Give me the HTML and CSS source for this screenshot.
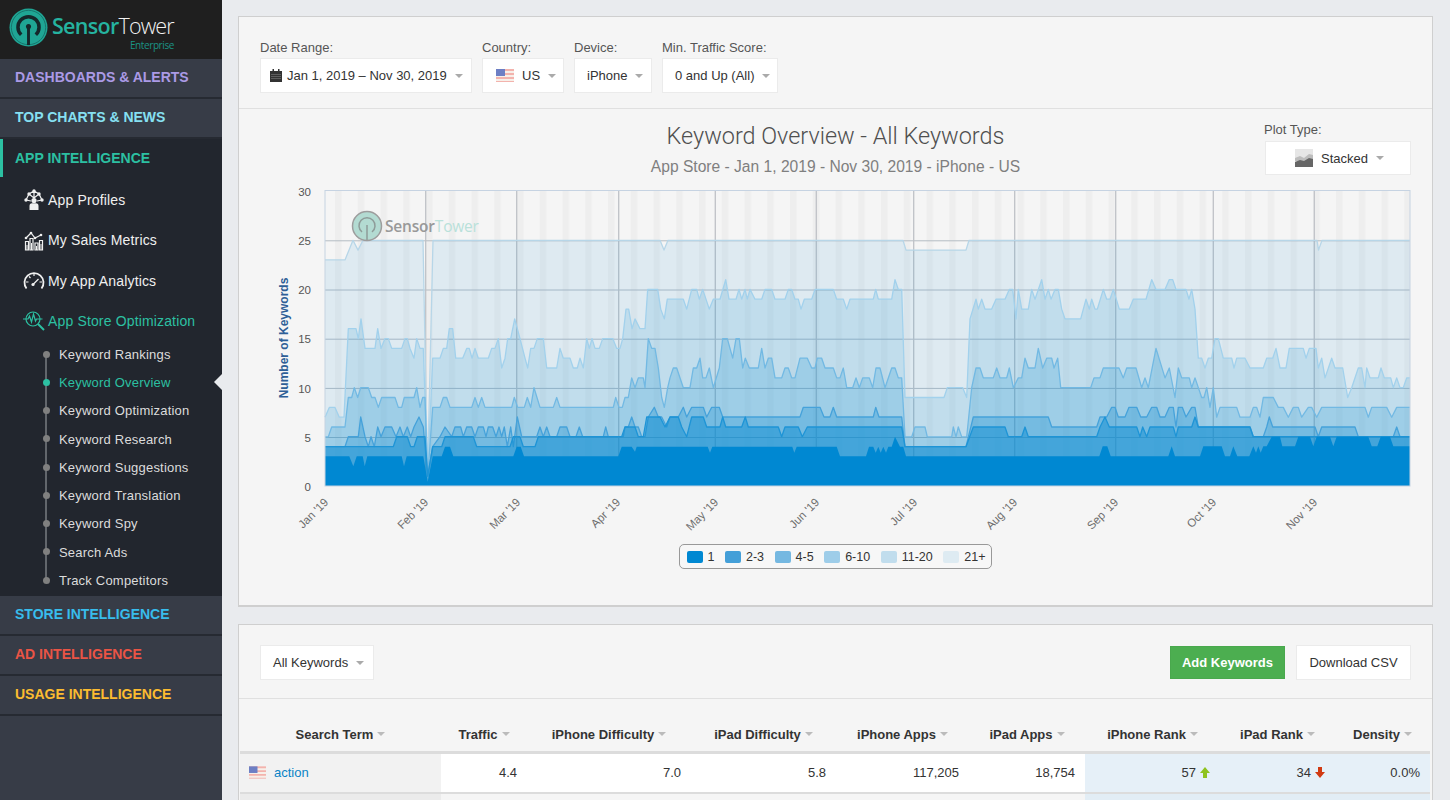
FILE: index.html
```html
<!DOCTYPE html>
<html lang="en">
<head>
<meta charset="utf-8">
<title>Keyword Overview - Sensor Tower</title>
<link rel="stylesheet" href="styles.css">
</head>
<body>
<div class="app">
  <aside class="sidebar">
    <div class="brand">
      <svg class="brand-mark" viewBox="0 0 40 40" aria-hidden="true">
        <circle cx="20" cy="20" r="19.5" fill="#1fa594"/>
        <circle cx="20" cy="20" r="17.6" fill="none" stroke="#17756d" stroke-width="1"/>
        <path d="M12.5 27.5a10.8 10.8 0 1 1 15 0" fill="none" stroke="#15272a" stroke-width="3.6"/>
        <path d="M20 19v19" stroke="#15272a" stroke-width="3"/>
        <circle cx="20" cy="19" r="2.6" fill="#15272a"/>
      </svg>
      <div class="brand-text">
        <div class="brand-name"><span class="brand-sensor">Sensor</span><span class="brand-tower">Tower</span></div>
        <div class="brand-sub">Enterprise</div>
      </div>
    </div>
    <div class="section purple">DASHBOARDS &amp; ALERTS</div>
    <div class="section cyan">TOP CHARTS &amp; NEWS</div>
    <div class="section-open">APP INTELLIGENCE</div>
    <nav class="subnav">
      <div class="subitem">
        <svg class="navicon" viewBox="0 0 22 22" aria-hidden="true">
          <path class="ic" d="M3 11 6 5l5-3 5 3 3 6M3 11l5 1M19 11l-5 1M6 5l5 4 5-4M11 2v7"/>
          <circle class="icf" cx="3" cy="11" r="1.700"/><circle class="icf" cx="6" cy="5" r="1.700"/><circle class="icf" cx="11" cy="2" r="1.700"/><circle class="icf" cx="16" cy="5" r="1.700"/><circle class="icf" cx="19" cy="11" r="1.700"/>
          <circle class="icf" cx="11" cy="11.500" r="2.600"/>
          <path class="icf" d="M6.500 21v-4q0-2.800 2.500-2.800h4q2.500 0 2.500 2.800v4z"/>
        </svg>
        <span>App Profiles</span>
      </div>
      <div class="subitem">
        <svg class="navicon" viewBox="0 0 22 22" aria-hidden="true">
          <path class="ic" d="M3 9l5-5 4 5 6-3"/>
          <circle class="icf" cx="3" cy="9" r="1.300"/><circle class="icf" cx="8" cy="4" r="1.300"/><circle class="icf" cx="12" cy="9" r="1.300"/><circle class="icf" cx="18" cy="6" r="1.300"/>
          <path class="ic" d="M2.500 12.500h3V21h-3zM7 9.500h3V21H7zM12 14h3v7h-3zM16.500 11.500h3V21h-3z"/>
          <path class="icf" d="M3.500 16h1v5h-1zM8 14h1v7H8zM13 17h1v4h-1zM17.500 15h1v6h-1z"/>
        </svg>
        <span>My Sales Metrics</span>
      </div>
      <div class="subitem">
        <svg class="navicon" viewBox="0 0 22 22" aria-hidden="true">
          <path class="gauge" d="M3.500 18.500a9.500 9.500 0 1 1 15 0"/>
          <path class="ic" d="M3 12h2.500M19 12h-2.500M6 6.500l1.500 1.500M11 3.500v2.500"/>
          <path class="ic" d="M10 14.500 15.500 9"/>
          <circle class="icf" cx="10" cy="14.500" r="1.600"/>
        </svg>
        <span>My App Analytics</span>
      </div>
      <div class="subitem active">
        <svg class="navicon teal" viewBox="0 0 22 22" aria-hidden="true">
          <circle class="ic" cx="10" cy="9" r="7"/>
          <path class="ic thick" d="M15 14l6 6"/>
          <path class="ic" d="M0 9h5l1.500-3 2 6 2-8 2 7 1-2h6"/>
        </svg>
        <span>App Store Optimization</span>
      </div>
    </nav>
    <ul class="tree">
      <li>Keyword Rankings</li>
      <li class="current">Keyword Overview</li>
      <li>Keyword Optimization</li>
      <li>Keyword Research</li>
      <li>Keyword Suggestions</li>
      <li>Keyword Translation</li>
      <li>Keyword Spy</li>
      <li>Search Ads</li>
      <li>Track Competitors</li>
    </ul>
    <div class="section blue">STORE INTELLIGENCE</div>
    <div class="section red">AD INTELLIGENCE</div>
    <div class="section yellow">USAGE INTELLIGENCE</div>
    <div class="side-fill"></div>
  </aside>

  <main class="main">
    <section class="panel chart-panel">
      <div class="filters">
        <div class="field">
          <label>Date Range:</label>
          <div class="select date-select">
            <svg class="cal" viewBox="0 0 12 13" aria-hidden="true"><path d="M0 2h2.500V0h1.500v2h4V0h1.500v2H12v11H0z" fill="#333"/><path d="M1 5h10v.6H1zM1 7.200h10v.6H1zM1 9.400h10v.6H1z" fill="#8a8a8a"/></svg>
            <span>Jan 1, 2019 – Nov 30, 2019</span><i class="caret"></i>
          </div>
        </div>
        <div class="field">
          <label>Country:</label>
          <div class="select country-select">
            <svg class="flag" viewBox="0 0 18 13" aria-hidden="true"><rect width="18" height="13" fill="#f3b3ad"/><path d="M0 2h18v2H0zM0 6h18v2H0zM0 10h18v2H0z" fill="#f7efe9"/><rect width="9" height="7" fill="#6d7fc4"/></svg>
            <span>US</span><i class="caret"></i>
          </div>
        </div>
        <div class="field">
          <label>Device:</label>
          <div class="select device-select"><span>iPhone</span><i class="caret"></i></div>
        </div>
        <div class="field">
          <label>Min. Traffic Score:</label>
          <div class="select traffic-select"><span>0 and Up (All)</span><i class="caret"></i></div>
        </div>
      </div>

      <div class="chart-head">
        <div></div>
        <div class="titles">
          <h1>Keyword Overview - All Keywords</h1>
          <h2>App Store - Jan 1, 2019 - Nov 30, 2019 - iPhone - US</h2>
        </div>
        <div class="plot-type">
          <label>Plot Type:</label>
          <div class="select plot-select">
            <svg class="plot-icon" viewBox="0 0 18 18" aria-hidden="true"><rect width="18" height="18" fill="#e6e6e6"/><path d="M0 9l5-2 4 2 5-4 4 1v6H0z" fill="#bdbdbd"/><path d="M0 13l5-2 4 1 5-3 4 1v8H0z" fill="#666"/></svg>
            <span>Stacked</span><i class="caret"></i>
          </div>
        </div>
      </div>

      <svg class="chart" viewBox="270 185 1150 350" role="img" aria-label="Number of keywords by rank, stacked area chart">
        <defs>
          <pattern id="weekends" patternUnits="userSpaceOnUse" x="335" y="0" width="22.75" height="10">
            <rect class="weekend" width="6.500" height="10"/>
          </pattern>
        </defs>
        <rect x="325" y="190.500" width="1085" height="295.500" fill="url(#weekends)"/>
        <g class="grid">
          <path d="M325 240.800H1410M325 290H1410M325 339.200H1410M325 388.400H1410M325 437.500H1410"/>
          <path class="grid-v" d="M425.700 191V486M516.700 191V486M618.700 191V486M715.300 191V486M816.300 191V486M913.700 191V486M1014.700 191V486M1115.700 191V486M1213.300 191V486M1314.300 191V486"/>
        </g>
        <g id="areas"></g>
        <rect class="plot-border" x="325" y="190.500" width="1085" height="295.500"/>
        <g class="watermark">
          <circle class="wm-disc" cx="367" cy="226" r="14.500"/>
          <path class="wm-mark" d="M362 232a8 8 0 1 1 10 0M367 225v15"/>
          <text x="385" y="232" class="wm-text"><tspan class="wm-sensor">Sensor</tspan><tspan class="wm-tower">Tower</tspan></text>
        </g>
        <g class="y-ticks">
          <text x="311" y="196">30</text>
          <text x="311" y="245">25</text>
          <text x="311" y="294">20</text>
          <text x="311" y="343">15</text>
          <text x="311" y="393">10</text>
          <text x="311" y="442">5</text>
          <text x="311" y="491">0</text>
        </g>
        <text class="y-title" transform="translate(288 338) rotate(-90)">Number of Keywords</text>
        <g class="x-ticks">
          <text transform="translate(329 503) rotate(-45)">Jan '19</text>
          <text transform="translate(429 503) rotate(-45)">Feb '19</text>
          <text transform="translate(521 503) rotate(-45)">Mar '19</text>
          <text transform="translate(621 503) rotate(-45)">Apr '19</text>
          <text transform="translate(719 503) rotate(-45)">May '19</text>
          <text transform="translate(820 503) rotate(-45)">Jun '19</text>
          <text transform="translate(918 503) rotate(-45)">Jul '19</text>
          <text transform="translate(1018 503) rotate(-45)">Aug '19</text>
          <text transform="translate(1119 503) rotate(-45)">Sep '19</text>
          <text transform="translate(1217 503) rotate(-45)">Oct '19</text>
          <text transform="translate(1318 503) rotate(-45)">Nov '19</text>
        </g>
      </svg>

      <div class="legend-wrap">
        <div class="legend">
          <span class="legend-item"><i class="swatch k1"></i>1</span>
          <span class="legend-item"><i class="swatch k2"></i>2-3</span>
          <span class="legend-item"><i class="swatch k3"></i>4-5</span>
          <span class="legend-item"><i class="swatch k4"></i>6-10</span>
          <span class="legend-item"><i class="swatch k5"></i>11-20</span>
          <span class="legend-item"><i class="swatch k6"></i>21+</span>
        </div>
      </div>
    </section>

    <section class="panel table-panel">
      <div class="toolbar">
        <div class="select keywords-select"><span>All Keywords</span><i class="caret"></i></div>
        <div class="actions">
          <button class="btn-add" type="button">Add Keywords</button>
          <button class="btn-csv" type="button">Download CSV</button>
        </div>
      </div>
      <div class="table">
        <div class="row head">
          <div class="th">Search Term<i class="caret"></i></div>
          <div class="th">Traffic<i class="caret"></i></div>
          <div class="th">iPhone Difficulty<i class="caret"></i></div>
          <div class="th">iPad Difficulty<i class="caret"></i></div>
          <div class="th">iPhone Apps<i class="caret"></i></div>
          <div class="th">iPad Apps<i class="caret"></i></div>
          <div class="th">iPhone Rank<i class="caret"></i></div>
          <div class="th">iPad Rank<i class="caret"></i></div>
          <div class="th">Density<i class="caret"></i></div>
        </div>
        <div class="row body">
          <div class="td term">
            <svg class="flag small" viewBox="0 0 18 13" aria-hidden="true"><rect width="18" height="13" fill="#f3b3ad"/><path d="M0 2h18v2H0zM0 6h18v2H0zM0 10h18v2H0z" fill="#f7efe9"/><rect width="9" height="7" fill="#6d7fc4"/></svg>
            <a href="#">action</a>
          </div>
          <div class="td">4.4</div>
          <div class="td">7.0</div>
          <div class="td">5.8</div>
          <div class="td">117,205</div>
          <div class="td">18,754</div>
          <div class="td rank">57<svg class="arrow" viewBox="0 0 10 11" aria-hidden="true"><path d="M5 0l5 6H7v5H3V6H0z" fill="#8fc31f"/></svg></div>
          <div class="td rank">34<svg class="arrow" viewBox="0 0 10 11" aria-hidden="true"><path d="M3 0h4v5h3l-5 6-5-6h3z" fill="#d13a12"/></svg></div>
          <div class="td rank">0.0%</div>
        </div>
        <div class="row body alt">
          <div class="td term"></div>
          <div class="td"></div><div class="td"></div><div class="td"></div><div class="td"></div><div class="td"></div>
          <div class="td rank"></div><div class="td rank"></div><div class="td rank"></div>
        </div>
      </div>
    </section>
  </main>
</div>
<script src="chart.js"></script>
</body>
</html>
```

FILE: styles.css
```css
* { box-sizing: border-box; }
html, body { margin: 0; height: 800px; overflow: hidden; }
body { font-family: "Liberation Sans", Arial, sans-serif; color: #333; background: #e9ebee; }
.app { display: flex; height: 800px; overflow: hidden; }

/* sidebar */
.sidebar { width: 222px; flex: none; display: flex; flex-direction: column; background: #22262e; position: relative; }
.brand { height: 59px; flex: none; background: #1f1f1f; display: flex; align-items: flex-start; padding: 8px 0 0 9px; gap: 4px; }
.brand-mark { width: 39px; height: 39px; flex: none; }
.brand-text { display: flex; flex-direction: column; width: 122px; font-family: "Open Sans", sans-serif; }
.brand-name { font-size: 21.500px; line-height: 24px; margin-top: 6px; letter-spacing: -0.5px; white-space: nowrap; }
.brand-sensor { color: #25b3a0; font-weight: 600; letter-spacing: -0.7px; }
.brand-tower { color: #f2f2f2; font-weight: 300; letter-spacing: -0.9px; }
.brand-sub { font-size: 10px; line-height: 11px; color: #1b9385; text-align: right; margin-top: 2px; letter-spacing: -0.4px; }
.section { height: 40px; flex: none; padding: 0 0 2px 15px; background: #373c47; border-bottom: 2px solid #262a32; display: flex; align-items: center; font-size: 14px; font-weight: 700; white-space: nowrap; }
.purple { color: #ab9ae6; }
.cyan { color: #86e0f2; }
.blue { color: #38bdec; }
.red { color: #ea5445; }
.yellow { color: #fcbc30; }
.section-open { height: 38px; flex: none; padding: 0 0 0 12px; border-left: 3px solid #2cc0a2; display: flex; align-items: center; font-size: 14px; font-weight: 700; color: #2cc0a2; }
.subnav { display: flex; flex-direction: column; padding-top: 3px; }
.subitem { height: 40.300px; display: flex; align-items: center; padding-left: 23px; gap: 3px; color: #f0f0f0; font-size: 14px; letter-spacing: 0.15px; white-space: nowrap; }
.subitem.active { color: #2cc0a2; }
.navicon { width: 22px; height: 22px; flex: none; color: #f0f0f0; }
.navicon.teal { color: #2cc0a2; }
.ic { fill: none; stroke: currentColor; stroke-width: 1.200; }
.ic.thick { stroke-width: 2; }
.gauge { fill: none; stroke: currentColor; stroke-width: 1.800; }
.icf { fill: currentColor; }
.tree { list-style: none; margin: -1px 0 0; padding: 0 0 2px 59px; position: relative; flex: none; }
.tree::before { content: ""; position: absolute; left: 45px; top: 14px; bottom: 16px; width: 2px; background: #62666c; }
.tree li { height: 28.250px; display: flex; align-items: center; font-size: 13px; color: #dcdcdc; position: relative; letter-spacing: 0.2px; }
.tree li::before { content: ""; position: absolute; left: -16.500px; top: 10.500px; width: 7px; height: 7px; border-radius: 50%; background: #808080; }
.tree li.current { color: #2cc0a2; }
.tree li.current::before { background: #2cc0a2; }
.tree li.current::after { content: ""; position: absolute; right: 0; top: 6px; border-style: solid; border-width: 8px 8px 8px 0; border-color: transparent #e9ebee transparent transparent; }
.side-fill { flex: 1; background: #373c47; }

/* main */
.main { flex: 1; min-width: 0; padding: 16px 17px 0 16px; display: flex; flex-direction: column; gap: 17px; }
.panel { background: #f5f5f5; border: 1px solid #cfcfcf; flex: none; }
.chart-panel { height: 591px; border-bottom-width: 2px; }
.filters { height: 92px; display: flex; gap: 10px; padding: 23px 0 0 21px; border-bottom: 1px solid #e0e0e0; }
.field { display: flex; flex-direction: column; gap: 3px; }
.field label, .plot-type label { font-size: 13px; line-height: 15px; color: #555; }
.select { height: 35px; background: #fff; border: 1px solid #ebebeb; display: flex; align-items: center; font-size: 13px; color: #333; white-space: nowrap; }
.caret { display: inline-block; width: 0; height: 0; border-style: solid; border-width: 4px 4px 0; border-color: #aaa transparent transparent; margin-left: 8px; flex: none; }
.date-select { width: 212px; padding-left: 9px; }
.date-select .cal { width: 12px; height: 13px; margin-right: 5px; }
.country-select { width: 82px; padding-left: 13px; }
.flag { width: 18px; height: 13px; margin-right: 8px; flex: none; }
.country-select .caret { margin-left: 8px; }
.device-select { width: 78px; padding-left: 12px; }
.traffic-select { width: 116px; padding-left: 12px; }

.chart-head { display: grid; grid-template-columns: 1fr auto 1fr; height: 76px; }
.titles { text-align: center; padding-top: 12px; }
.titles h1 { margin: 0; font-family: Roboto, "Liberation Sans", sans-serif; font-size: 23.400px; line-height: 30px; font-weight: 300; color: #4f4f4f; }
.titles h2 { margin: 5px 0 0; font-size: 15.600px; line-height: 22px; font-weight: 400; color: #7f7f7f; }
.plot-type { display: flex; flex-direction: column; align-items: flex-end; padding: 13px 21px 0 0; gap: 4px; }
.plot-type label { width: 147px; }
.plot-select { width: 146px; height: 34px; justify-content: center; padding-left: 3px; }
.plot-icon { width: 18px; height: 18px; margin-right: 8px; }

.chart { display: block; width: 1150px; height: 350px; margin-left: 31px; }
.weekend { fill: #000; fill-opacity: 0.028; }
.grid path { fill: none; stroke: #b4bcc4; stroke-width: 1; }
.grid .grid-v { stroke: #bfc2c7; stroke-width: 1.300; }
.plot-border { fill: none; stroke: #c6d3e2; stroke-width: 1; }
.area { stroke: none; }
.a6 { fill: #0088d2; fill-opacity: 0.09; }
.a5 { fill: #0088d2; fill-opacity: 0.13; }
.a4 { fill: #0088d2; fill-opacity: 0.18; }
.a3 { fill: #0088d2; fill-opacity: 0.26; }
.a2 { fill: #0088d2; fill-opacity: 0.42; }
.a1 { fill: #0088d2; }
.line { fill: none; stroke-width: 1.300; stroke-linejoin: round; }
.l6 { stroke: #b7d6e8; }
.l5 { stroke: #a2d1ec; }
.l4 { stroke: #72b9e3; }
.l3 { stroke: #46a2da; }
.l2 { stroke: #1e94d6; }
.wm-disc { fill: #afd9d0; stroke: #9d9d9d; stroke-width: 1.500; fill-opacity: 0.95; }
.wm-mark { fill: none; stroke: #8e9c99; stroke-width: 1.500; }
.wm-text { font-family: "Open Sans", sans-serif; font-size: 15.500px; letter-spacing: -0.2px; }
.wm-sensor { fill: #999; font-weight: 600; }
.wm-tower { fill: #b9e1da; }
.y-ticks text { font-size: 11.500px; fill: #555; text-anchor: end; }
.y-title { font-size: 12px; font-weight: 700; fill: #2e5f97; text-anchor: middle; }
.x-ticks text { font-size: 11.500px; fill: #6e6e6e; text-anchor: end; }

.legend-wrap { display: flex; justify-content: center; padding-top: 9px; }
.legend { height: 25px; border: 1px solid #999; border-radius: 5px; background: #f7f7f7; display: flex; align-items: center; gap: 10.500px; padding: 0 6px 0 7px; font-size: 12.500px; color: #333; }
.legend-item { display: flex; align-items: center; gap: 5px; }
.swatch { width: 16px; height: 12px; border-radius: 2px; }
.k1 { background: #0088d2; }
.k2 { background: #449fd8; }
.k3 { background: #75b8e1; }
.k4 { background: #9ecde9; }
.k5 { background: #c1dded; }
.k6 { background: #deebf2; }

/* table panel */
.table-panel { height: 300px; }
.toolbar { height: 74px; border-bottom: 1px solid #e0e0e0; display: flex; justify-content: space-between; align-items: flex-start; padding: 20px 21px 0 21px; }
.keywords-select { width: 114px; padding-left: 12px; }
.actions { display: flex; gap: 11px; align-items: center; }
.btn-add { width: 115px; height: 33px; border: 1px solid #49a84d; background: #4cae50; color: #fff; font: 700 13px "Liberation Sans", Arial, sans-serif; padding: 0; }
.btn-csv { width: 115px; height: 35px; border: 1px solid #ebebeb; background: #fff; color: #333; font: 13px "Liberation Sans", Arial, sans-serif; padding: 0; }
.table { width: 1190px; margin-left: 1px; }
.row { display: grid; grid-template-columns: 201px 86px 164px 145px 133px 116px 135px 115px 95px; }
.head { height: 55px; align-items: end; border-bottom: 3px solid #dcdcdc; }
.th { font-size: 13px; font-weight: 700; color: #333; display: flex; justify-content: center; align-items: center; height: 18px; margin-bottom: 8px; white-space: nowrap; }
.th .caret { margin-left: 4px; border-color: #bbb transparent transparent; }
.body { height: 40px; border-bottom: 2px solid #dcdcdc; }
.td { display: flex; align-items: center; justify-content: flex-end; padding: 0 10px 2px 0; font-size: 13px; color: #333; background: #fff; }
.td.term { justify-content: flex-start; padding-left: 9px; background: #f2f2f2; }
.td.rank { background: #e6f0f8; }
.flag.small { width: 17px; height: 13px; margin-right: 8px; }
.td a { color: #0a83c6; text-decoration: none; }
.arrow { width: 10px; height: 11px; margin-left: 4px; }
.alt .td { background: #f5f5f5; }
.alt .td.term { background: #ebebeb; }
.alt .td.rank { background: #e2edf5; }
```

FILE: chart.js
```js
// Plot data, traced per segment as pairs of [x, level or raw y].
var A = [270, 180], B = [670, 180], C = [1050, 110], P = [0, 180];

function build(segs) {
  var pts = [];
  segs.forEach(function (seg) {
    var o = seg[0], d = seg[1];
    for (var i = 0; i < d.length; i += 2) {
      var x = o === P ? d[i] : o[0] + d[i] / 3;
      var y = d[i + 1] > 30 ? o[1] + d[i + 1] / 3 : 486 - 9.83 * d[i + 1];
      if (!pts.length || x > pts[pts.length - 1][0]) pts.push([x, y]);
    }
  });
  return pts;
}

var series = [
  [6, [[P, [325,23,345,23,353,25,358,24,363,25,423,25,427.5,1,433,25,660,25,664,24,668,25,903,25,906,24,966,24,969,25,1317,25,1318.5,24,1322,25,1410,25]]]],
  [5, [[A, [165,7,178,8,195,8,208,7,222,7,235,16,258,16,265,15,273,17,285,14,315,14,323,16,333,14,345,15,355,15,365,14,395,14,405,15,412,15,420,14,432,13,440,15,450,14,460,14,473,1,488,13,510,13,520,14,530,14,538,16,548,16,557,13,578,13,590,14,598,14,606,13,615,14,625,13,655,13,665,14,675,14,685,15,695,12,705,13,713,15,722,15,734,17,750,15,765,13,773,12,782,14,792,14,802,15,820,15,830,12,860,12,870,14,880,13,900,13,910,12,922,12,930,13,940,12,950,15,958,14,966,15,975,14,988,14,998,15,1028,15,1040,14,1050,14,1058,15,1068,18,1076,18,1086,16,1095,17,1110,16,1125,16,1133,20,1163,20,1172,18,1183,17,1192,19,1200,19]],
       [B, [40,19,50,18,65,20,80,20,88,19,98,20,118,18,130,19,150,19,167,21,177,19,198,19,207,20,215,19,225,20,232,19,240,20,255,19,275,19,285,20,305,20,315,19,345,19,355,20,365,20,375,19,385,19,393,18,403,19,425,19,435,20,490,20,500,19,520,19,530,18,540,19,610,19,617,20,625,19,665,19,675,21,685,20,695,20,705,9,822,9,832,10,878,10,890,9,900,17,918,19,925,18,935,19,945,18,965,18,978,19,1005,19,1018,20,1028,20,1038,17,1045,20,1055,18,1075,18,1085,20,1095,19,1115,21,1125,19,1135,20,1143,19,1155,20,1165,20,1175,18,1185,17,1200,17]],
       [C, [92,17,108,19,118,18,125,19,135,18,142,18,160,20,170,19,180,19,190,20,208,18,238,18,250,19,288,19,305,21,318,20,345,20,358,21,368,21,378,20,408,20,417,19,425,20,435,18,445,13,455,13,465,12,475,13,485,13,495,15,505,15,520,13,545,13,552,12,560,13,585,13,600,12,640,12,650,13,668,13,678,14,690,12,708,12,718,14,760,14,768,13,778,14,798,14,805,12,815,13,825,11,845,13,855,12,878,12,893,9,905,10,925,12,935,12,945,10,950,12,960,11,985,11,993,12,1003,11,1022,11,1030,10,1040,11,1050,10,1060,10,1070,11,1080,11]]]],
  [4, [[A, [165,5,175,5,185,6,225,6,235,9,245,9,253,10,263,9,272,10,295,10,305,9,315,9,325,8,335,9,375,9,385,8,395,8,403,9,432,9,440,10,450,8,458,9,465,9,473,1,488,8,510,8,520,9,530,9,540,8,605,8,615,9,625,8,635,9,645,8,725,8,733,9,743,8,763,8,772,9,782,8,792,10,810,8,850,8,860,9,870,8,1030,8,1037,9,1047,8,1057,8,1065,9,1075,9,1085,11,1095,10,1105,11,1120,11,1125,10,1135,15,1145,14,1155,14,1165,12,1175,9,1183,8,1193,10,1200,11]],
       [B, [10,12,20,12,40,10,60,10,70,12,80,12,90,13,98,11,108,11,118,12,130,10,148,12,158,15,172,15,188,13,198,15,208,15,218,12,226,13,238,12,265,12,275,14,285,12,295,13,305,13,315,11,335,11,345,12,355,12,365,11,375,11,390,13,412,13,425,12,435,12,442,13,455,13,465,12,490,12,500,11,510,11,520,12,530,10,548,10,558,11,568,10,578,11,598,11,608,10,618,12,630,12,645,10,665,12,675,12,685,11,695,11,705,5,725,5,735,6,765,6,772,5,845,5,850,6,858,5,865,6,875,5,890,5,905,10,918,12,930,12,940,11,970,11,980,12,990,11,1010,11,1018,12,1030,10,1045,11,1055,11,1065,13,1075,12,1095,12,1105,14,1118,12,1130,13,1145,13,1152,12,1163,13,1172,10,1200,10]],
       [C, [122,10,132,11,150,11,160,12,207,12,220,11,230,12,258,12,275,10,285,11,295,10,318,14,345,11,358,12,375,9,385,12,395,11,418,11,425,10,435,11,455,9,462,9,470,10,480,8,490,10,500,7,510,8,560,8,570,7,600,7,610,8,620,8,630,7,640,9,670,9,685,8,700,8,715,7,730,8,745,8,755,7,775,8,785,8,800,7,815,8,945,8,955,7,965,8,1010,8,1025,7,1040,8,1080,8]]]],
  [3, [[A, [165,800,225,800,235,770,265,770,272,711,285,770,295,800,303,770,313,800,323,741,333,770,345,741,365,741,378,770,390,741,400,770,412,741,422,770,432,741,447,711,460,741,473,888,488,800,510,770,525,741,545,770,555,741,572,741,580,770,590,741,605,741,615,770,625,741,640,741,648,770,655,741,668,741,678,770,687,741,695,770,703,741,712,800,722,741,730,800,742,711,755,770,800,770,810,741,820,770,830,741,840,770,860,770,870,741,890,741,900,770,918,770,928,741,938,770,1000,770,1007,741,1015,770,1060,770,1065,741,1075,741,1085,711,1095,741,1105,741,1115,770,1125,770,1135,711,1153,682,1165,711,1175,711,1190,741,1200,711]],
       [B, [25,711,40,682,50,711,65,682,100,682,110,711,125,682,148,682,158,711,390,711,400,682,450,682,462,711,480,711,490,682,500,711,610,711,617,682,627,711,695,711,705,800,888,800,910,711,1135,711,1145,741,1200,741]],
       [C, [140,951,150,921,170,921,185,892,195,892,205,921,225,921,237,892,260,892,272,921,290,921,305,892,320,892,330,921,345,921,358,892,370,892,378,951,385,892,397,892,408,921,425,892,435,892,445,951,600,951,610,980,640,980,650,951,658,921,668,951,795,951,805,980,815,951,915,951,925,980,1030,980,1040,951,1050,980,1080,980]]]],
  [2, [[A, [165,800,370,800,380,770,412,770,422,800,432,800,442,770,465,770,473,888,488,800,515,800,525,770,610,770,620,800,720,800,730,770,750,770,760,800,795,800,805,770,1055,770,1065,741,1095,741,1105,770,1120,770,1130,711,1170,711,1185,741,1200,711]],
       [B, [25,711,35,741,50,770,65,711,100,711,110,741,150,741,158,711,167,741,215,741,226,711,235,741,325,741,335,770,345,741,385,741,397,770,412,741,695,741,705,800,888,800,910,741,1005,741,1015,770,1055,770,1065,741,1075,770,1200,770]],
       [C, [140,980,150,951,165,921,178,951,260,951,270,980,278,951,290,980,300,951,370,951,378,980,385,951,425,951,435,921,445,951,600,951,610,980,1080,980]]]],
  [1, [[A, [165,829,238,829,250,859,260,829,278,829,284,859,292,829,395,829,402,859,410,829,460,829,473,905,488,829,515,829,525,800,540,800,550,829,730,829,740,800,752,800,762,829,1045,829,1055,800,1085,800,1095,815,1100,800,1200,800]],
       [B, [113,800,120,818,127,800,367,800,373,818,380,800,500,800,510,829,588,829,597,800,610,800,617,818,625,800,632,818,640,800,648,818,655,800,665,800,675,770,690,800,700,800,708,829,1200,829]],
       [C, [148,1039,158,1009,172,1009,182,1039,355,1039,365,1009,375,1039,450,1039,460,1009,515,1009,525,1039,540,1039,550,1009,562,1039,598,1039,610,1009,618,1028,625,1009,632,1028,640,1009,650,1009,665,980,690,980,697,1009,735,1009,745,980,780,980,790,1009,800,980,840,980,850,1009,860,980,955,980,965,1009,982,1009,992,980,1020,980,1030,1009,1080,1009]]]]
];

var NS = "http://www.w3.org/2000/svg";
var group = document.getElementById("areas");

function add(cls, d) {
  var p = document.createElementNS(NS, "path");
  p.setAttribute("class", cls);
  p.setAttribute("d", d);
  group.appendChild(p);
}

series.forEach(function (s) {
  var pts = build(s[1]);
  var line = pts.map(function (p, i) {
    return (i ? "L" : "M") + p[0].toFixed(1) + " " + p[1].toFixed(1);
  }).join("");
  add("area a" + s[0], line + "L" + pts[pts.length - 1][0].toFixed(1) + " 486L325 486Z");
  if (s[0] > 1) add("line l" + s[0], line);
});
```
